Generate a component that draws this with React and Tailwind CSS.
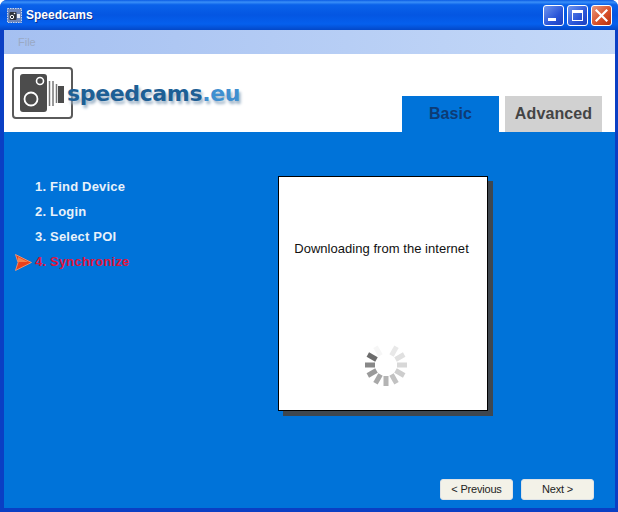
import React from "react";

const STEPS = ["1. Find Device", "2. Login", "3. Select POI"];

// spinner spokes, clockwise from the top; darkest one sits upper left
const SPOKES = [
  { a: 0, c: "#ffffff" },
  { a: 30, c: "#e8e8e8" },
  { a: 60, c: "#e0e0e0" },
  { a: 90, c: "#d8d8d8" },
  { a: 120, c: "#cdcdcd" },
  { a: 150, c: "#c2c2c2" },
  { a: 180, c: "#b4b4b4" },
  { a: 210, c: "#a8a8a8" },
  { a: 240, c: "#9a9a9a" },
  { a: 270, c: "#888888" },
  { a: 300, c: "#6c6c6c" },
  { a: 330, c: "#f6f6f6" },
];

function AppIcon() {
  return (
    <svg width="15" height="15" viewBox="0 0 15 15">
      <rect x="0.5" y="0.5" width="14" height="14" fill="#6f86b8" stroke="#c8d4ea" strokeDasharray="1.5 1" />
      <rect x="2.5" y="4" width="7" height="8" rx="1" fill="#2f333b" />
      <circle cx="5" cy="9" r="1.7" fill="none" stroke="#fff" />
      <circle cx="7.5" cy="5.5" r="0.8" fill="#fff" />
      <path d="M10 6 H13 V10 H10 Z" fill="#e8ecf4" />
    </svg>
  );
}

function WindowButtons() {
  return (
    <div className="flex items-center gap-[3px] mr-[2px]">
      <div className="w-[21px] h-[21px] rounded-[3px] border border-white bg-[linear-gradient(135deg,#6f95ee,#2a55d8_60%,#1c40c0)] relative">
        <div className="absolute left-[4px] bottom-[4px] w-[8px] h-[3px] bg-white" />
      </div>
      <div className="w-[21px] h-[21px] rounded-[3px] border border-white bg-[linear-gradient(135deg,#6f95ee,#2a55d8_60%,#1c40c0)] relative">
        <div className="absolute left-[4px] top-[4px] w-[11px] h-[11px] border border-white border-t-[3px]" />
      </div>
      <div className="w-[21px] h-[21px] rounded-[3px] border border-white bg-[linear-gradient(135deg,#e89a80,#d9512a_55%,#b5300f)] flex items-center justify-center">
        <svg width="13" height="13" viewBox="0 0 13 13">
          <path d="M1.5 1.5 L11.5 11.5 M11.5 1.5 L1.5 11.5" stroke="#fff" strokeWidth="2.2" strokeLinecap="square" />
        </svg>
      </div>
    </div>
  );
}

function LogoMark() {
  return (
    <svg width="61" height="52" viewBox="0 0 61 52" className="shrink-0">
      <rect x="1" y="1" width="59" height="50" rx="3" fill="#fff" stroke="#5a5a5a" strokeWidth="2" />
      <rect x="8" y="7" width="27" height="38" rx="3" fill="#4c4c4c" />
      <circle cx="28" cy="14" r="3.5" fill="#4c4c4c" stroke="#fff" strokeWidth="1.6" />
      <circle cx="19" cy="32" r="6.5" fill="#4c4c4c" stroke="#fff" strokeWidth="1.8" />
      <path d="M37.5 14 V39 M41 14 V39 M44.5 17 V36" stroke="#777" strokeWidth="1.5" />
      <path d="M46 19 H52 V36 H46 Z" fill="#4c4c4c" />
    </svg>
  );
}

function Spinner() {
  return (
    <svg width="46" height="46" viewBox="-23 -23 46 46">
      {SPOKES.map((s) => (
        <rect
          key={s.a}
          x="-2.5"
          y="-21"
          width="5"
          height="10"
          fill={s.c}
          transform={`rotate(${s.a})`}
        />
      ))}
    </svg>
  );
}

function NavButton({ children }) {
  return (
    <button className="w-[73px] h-[21px] rounded-[3px] bg-[#f3f2e8] border border-[#dfe3e6] text-[11px] tracking-[-0.2px] text-[#222] leading-none">
      {children}
    </button>
  );
}

export default function App() {
  return (
    <div className="w-[618px] h-[512px] flex flex-col bg-[#0a3fc4] rounded-t-[7px] overflow-hidden font-['Liberation_Sans',Arial,sans-serif]">
      {/* Title bar */}
      <div className="h-[30px] shrink-0 flex items-center pl-[7px] pr-[4px] bg-[linear-gradient(180deg,#0a5be4_0%,#3a8ff8_7%,#0a62ea_16%,#0456e2_50%,#0560ee_80%,#0348c8_100%)]">
        <AppIcon />
        <span className="ml-[4px] text-[12px] font-bold text-white [text-shadow:1px_1px_0_#0a2f90]">
          Speedcams
        </span>
        <div className="ml-auto">
          <WindowButtons />
        </div>
      </div>

      <div className="flex-1 flex flex-col ml-[4px] mr-[3px] mb-[4px]">
        {/* Menu bar */}
        <div className="h-[24px] shrink-0 flex items-center pl-[14px] bg-[linear-gradient(90deg,#a5c0f1,#c5d9f8)] text-[11px] text-[#9aa9c4]">
          File
        </div>

        {/* Logo and tabs */}
        <div className="h-[78px] shrink-0 bg-white flex justify-between">
          <div className="flex items-start pl-[8px] pt-[13px]">
            <LogoMark />
            <span className="mt-[14px] -ml-[6px] text-[22px] leading-[26px] font-bold font-['DejaVu_Sans',sans-serif] text-[#1d5f95] tracking-[-0.35px] [text-shadow:2px_3px_3px_#9fb4c8]">
              speedcams<span className="text-[#3f8fd0]">.eu</span>
            </span>
          </div>
          <div className="flex items-end gap-[6px] pr-[13px]">
            <div className="w-[97px] h-[36px] bg-[#0073d9] flex items-center justify-center text-[16px] font-bold text-[#0d3b75] tracking-[0.1px]">
              Basic
            </div>
            <div className="w-[97px] h-[36px] bg-[#d1d1d1] flex items-center justify-center text-[16px] font-bold text-[#444] tracking-[0.1px]">
              Advanced
            </div>
          </div>
        </div>

        {/* Wizard body */}
        <div className="flex-1 flex flex-col bg-[#0073d9]">
          <div className="flex-1 flex">
            <div className="w-[274px] shrink-0 pt-[46px] pl-[11px]">
              <div className="flex flex-col gap-[7px] text-[13px] leading-[18px] font-bold tracking-[0.2px]">
                {STEPS.map((s) => (
                  <div key={s} className="pl-[20px] text-[#e8f1fa]">
                    {s}
                  </div>
                ))}
                <div className="flex items-center text-[#e0143c]">
                  <svg width="17" height="17" viewBox="0 0 17 17" className="shrink-0 mr-[3px]">
                    <path d="M0.5 0.5 L16.5 8.5 L0.5 16.5 L3 8.5 Z" fill="#e8401c" stroke="#f8a078" strokeWidth="0.8" />
                    <path d="M3 3 L13 8 L3 8 Z" fill="#f4824a" />
                  </svg>
                  4. Synchronize
                </div>
              </div>
            </div>

            <div className="pt-[44px]">
              <div className="w-[210px] h-[235px] bg-white border border-black shadow-[5px_5px_0_#3f474f] flex flex-col items-center">
                <div className="mt-[63px] -ml-[3px] text-[13px] tracking-[0.04px] leading-[18px] text-[#111] whitespace-nowrap">
                  Downloading from the internet
                </div>
                <div className="mt-[84px] ml-[6px]">
                  <Spinner />
                </div>
              </div>
            </div>
          </div>

          {/* Footer buttons */}
          <div className="flex justify-end gap-[8px] pr-[21px] pb-[8px]">
            <NavButton>&lt; Previous</NavButton>
            <NavButton>Next &gt;</NavButton>
          </div>
        </div>
      </div>
    </div>
  );
}
